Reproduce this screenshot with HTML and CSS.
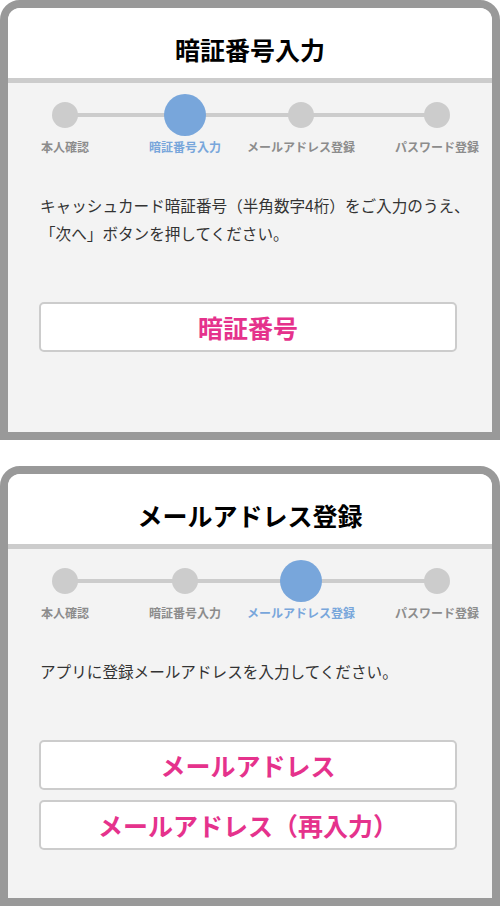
FILE: index.html
```html
<!DOCTYPE html>
<html lang="ja">
<head>
    <meta charset="UTF-8">
    <meta name="viewport" content="width=device-width, initial-scale=1.0">
    <title>暗証番号入力</title>
    <link rel="stylesheet" href="styles.css">
</head>
<body>
    <!-- Step 2: PIN -->
    <div class="panel">
        <h2 class="panel-head">暗証番号入力</h2>
        <div class="panel-body">
            <div class="steps">
                <div class="step"><span class="dot-area"><span class="dot"></span></span><span class="step-label">本人確認</span></div>
                <div class="step active"><span class="dot-area"><span class="dot"></span></span><span class="step-label">暗証番号入力</span></div>
                <div class="step"><span class="dot-area"><span class="dot"></span></span><span class="step-label">メールアドレス登録</span></div>
                <div class="step"><span class="dot-area"><span class="dot"></span></span><span class="step-label">パスワード登録</span></div>
            </div>

            <p class="desc">キャッシュカード暗証番号（半角数字4桁）をご入力のうえ、<br>「次へ」ボタンを押してください。</p>

            <div class="fields">
                <input type="password" class="field" placeholder="暗証番号" maxlength="4">
            </div>
        </div>
    </div>

    <!-- Step 3: mail address -->
    <div class="panel">
        <h2 class="panel-head">メールアドレス登録</h2>
        <div class="panel-body">
            <div class="steps">
                <div class="step"><span class="dot-area"><span class="dot"></span></span><span class="step-label">本人確認</span></div>
                <div class="step"><span class="dot-area"><span class="dot"></span></span><span class="step-label">暗証番号入力</span></div>
                <div class="step active"><span class="dot-area"><span class="dot"></span></span><span class="step-label">メールアドレス登録</span></div>
                <div class="step"><span class="dot-area"><span class="dot"></span></span><span class="step-label">パスワード登録</span></div>
            </div>

            <p class="desc">アプリに登録メールアドレスを入力してください。</p>

            <div class="fields">
                <input type="email" class="field" placeholder="メールアドレス">
                <input type="email" class="field" placeholder="メールアドレス（再入力）">
            </div>
        </div>
    </div>
</body>
</html>
```

FILE: styles.css
```css
body {
    margin: 0;
    padding: 0;
    background-color: #fff;
    font-family: "Noto Sans CJK JP", "Noto Sans", sans-serif;
    color: #333;
}
.panel {
    height: 440px;
    box-sizing: border-box;
    border: 8px solid #999;
    border-radius: 20px 20px 0 0;
    background-color: #f3f3f3;
    overflow: hidden;
}
.panel + .panel {
    margin-top: 26px;
}
.panel-head {
    margin: 0;
    height: 75px;
    box-sizing: border-box;
    padding-top: 29px;
    background: #fff;
    border-bottom: 5px solid #ccc;
    text-align: center;
    font-size: 25px;
    line-height: 25px;
    font-weight: bold;
    color: #000;
}
.panel-body {
    padding-top: 11px;
}
.steps {
    position: relative;
    display: grid;
    grid-template-columns: 120px 116px 136px 0;
    padding-left: 57px;
}
.steps::before {
    content: "";
    position: absolute;
    left: 57px;
    width: 372px;
    top: 19px;
    height: 4px;
    background: #ccc;
}
.step {
    position: relative;
    width: 0;
    display: flex;
    flex-direction: column;
    align-items: center;
}
.dot-area {
    height: 42px;
    display: flex;
    align-items: center;
}
.dot {
    width: 26px;
    height: 26px;
    border-radius: 50%;
    background: #ccc;
}
.step-label {
    margin-top: 4px;
    white-space: nowrap;
    font-size: 12px;
    line-height: 14px;
    font-weight: bold;
    color: #8c8c8c;
}
.step.active .dot {
    width: 42px;
    height: 42px;
    background: #78a6db;
}
.step.active .step-label {
    color: #78a6db;
}
.desc {
    margin: 37px 0 0;
    padding-left: 32px;
    font-size: 15.6px;
    line-height: 28px;
    color: #333;
}
.fields {
    margin: 55px 0 0 31px;
    width: 418px;
    display: flex;
    flex-direction: column;
    gap: 10px;
}
.field {
    display: block;
    width: 100%;
    height: 50px;
    box-sizing: border-box;
    margin: 0;
    padding: 0 10px;
    border: 2px solid #ccc;
    border-radius: 5px;
    background: #fff;
    font-family: inherit;
    font-size: 25px;
    font-weight: bold;
    text-align: center;
    color: #333;
}
.field::placeholder {
    color: #e5328c;
    opacity: 1;
}
```
